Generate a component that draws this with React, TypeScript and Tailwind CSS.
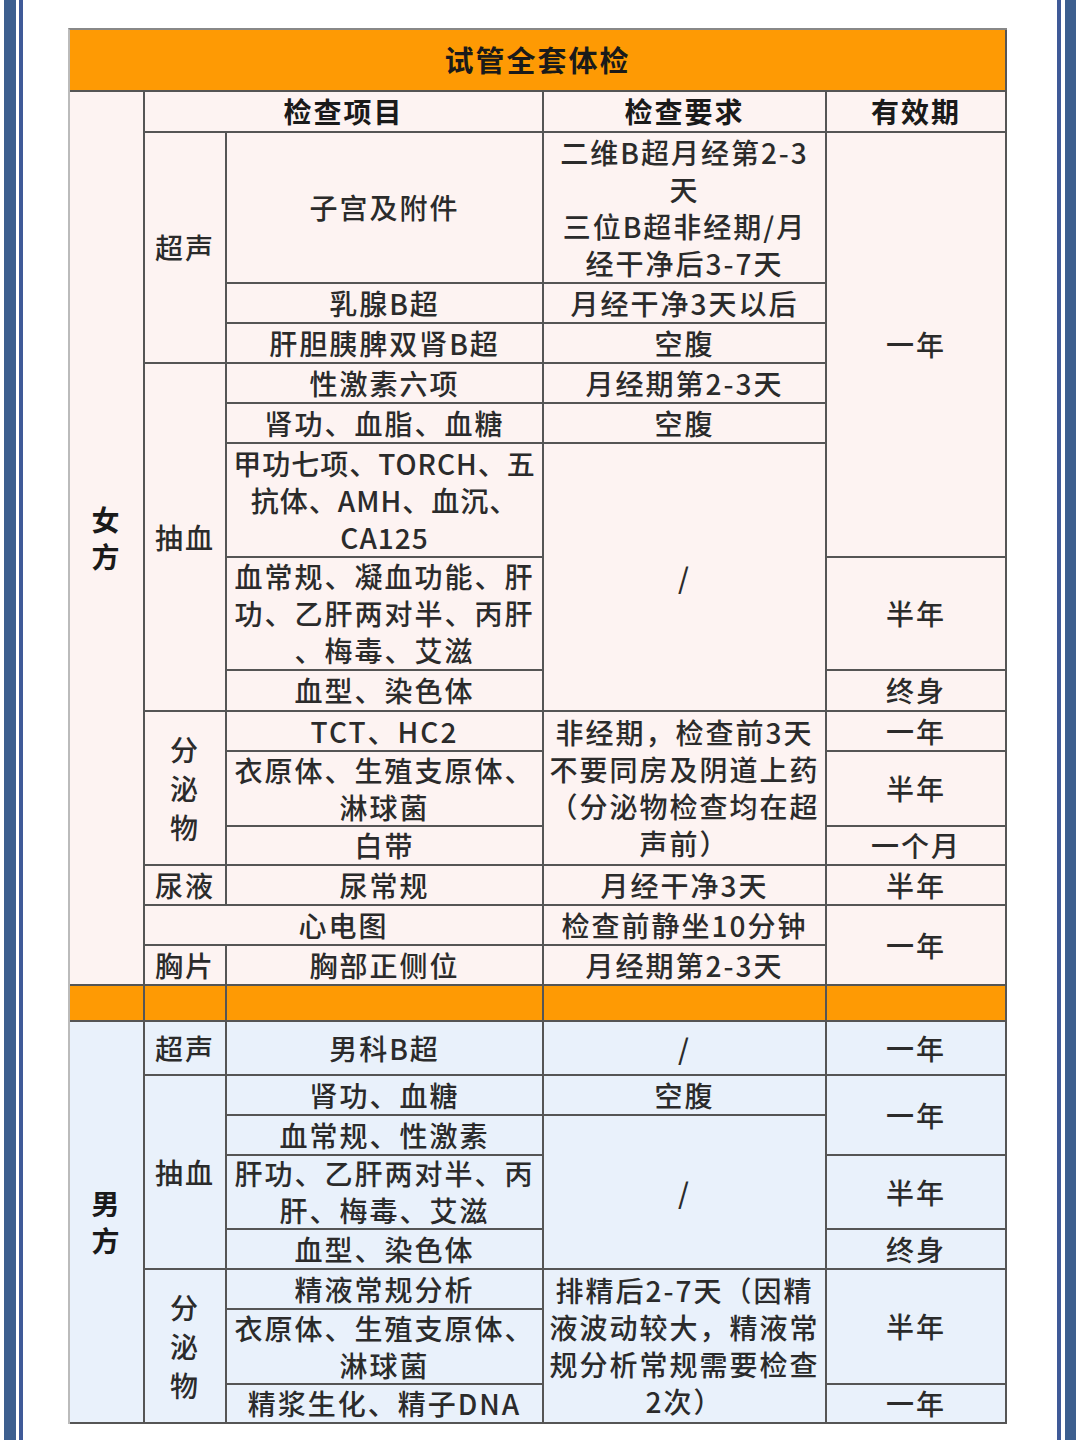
import React from 'react';

type Tone = 'f' | 'm' | 'o';

interface CellProps {
  pos: string;
  tone: Tone;
  bold?: boolean;
  children?: React.ReactNode;
}

const toneBg: Record<Tone, string> = {
  f: 'bg-[#fdf3f2]',
  m: 'bg-[#e9f1fb]',
  o: 'bg-[#fe9a04]',
};

const Cell: React.FC<CellProps> = ({ pos, tone, bold, children }) => (
  <div
    className={`${pos} ${toneBg[tone]} flex items-center justify-center text-center border-r-2 border-b-2 border-[#555] leading-[37px] whitespace-nowrap ${
      bold ? 'font-bold text-[#1a1a1a]' : 'font-medium text-[#2b2b2b]'
    }`}
  >
    <div>{children}</div>
  </div>
);

const Lines: React.FC<{ lines: string[] }> = ({ lines }) => (
  <>
    {lines.map((l, i) => (
      <div key={i}>{l}</div>
    ))}
  </>
);

const App: React.FC = () => {
  return (
    <div className="w-[1080px] h-[1440px] bg-white flex overflow-hidden">
      {/* left frame */}
      <div className="w-[4px] shrink-0" />
      <div className="w-[12px] shrink-0 bg-[#3d5f8f]" />
      <div className="w-[3px] shrink-0" />
      <div className="w-[4px] shrink-0 bg-[#3f5a98]" />

      <div className="flex-1 pt-[28px] pl-[45px]">
        <div
          className="grid w-fit grid-cols-[75px_82px_317px_283px_180px] grid-rows-[62px_41px_151px_40px_40px_40px_40px_114px_113px_41px_40px_75px_39px_40px_40px_40px_36px_54px_40px_40px_74px_40px_40px_75px_39px] border-t-2 border-l-2 border-t-[#888] border-l-[#bbb] text-[28px] tracking-[2px]"
          style={{ fontFamily: '"Noto Sans CJK SC", "Noto Sans", sans-serif' }}
        >
          {/* title */}
          <Cell pos="col-start-1 col-span-5 row-start-1" tone="o" bold>
            <span className="text-[29px]">试管全套体检</span>
          </Cell>

          {/* header */}
          <Cell pos="col-start-1 row-start-2 row-span-15" tone="f" bold>
            <div className="leading-[37px]">女<br />方</div>
          </Cell>
          <Cell pos="col-start-2 col-span-2 row-start-2" tone="f" bold>检查项目</Cell>
          <Cell pos="col-start-4 row-start-2" tone="f" bold>检查要求</Cell>
          <Cell pos="col-start-5 row-start-2" tone="f" bold>有效期</Cell>

          {/* 女方 超声 */}
          <Cell pos="col-start-2 row-start-3 row-span-3" tone="f">超声</Cell>
          <Cell pos="col-start-3 row-start-3" tone="f">子宫及附件</Cell>
          <Cell pos="col-start-4 row-start-3" tone="f">
            <Lines lines={['二维B超月经第2-3', '天', '三位B超非经期/月', '经干净后3-7天']} />
          </Cell>
          <Cell pos="col-start-5 row-start-3 row-span-6" tone="f">一年</Cell>
          <Cell pos="col-start-3 row-start-4" tone="f">乳腺B超</Cell>
          <Cell pos="col-start-4 row-start-4" tone="f">月经干净3天以后</Cell>
          <Cell pos="col-start-3 row-start-5" tone="f">肝胆胰脾双肾B超</Cell>
          <Cell pos="col-start-4 row-start-5" tone="f">空腹</Cell>

          {/* 女方 抽血 */}
          <Cell pos="col-start-2 row-start-6 row-span-5" tone="f">抽血</Cell>
          <Cell pos="col-start-3 row-start-6" tone="f">性激素六项</Cell>
          <Cell pos="col-start-4 row-start-6" tone="f">月经期第2-3天</Cell>
          <Cell pos="col-start-3 row-start-7" tone="f">肾功、血脂、血糖</Cell>
          <Cell pos="col-start-4 row-start-7" tone="f">空腹</Cell>
          <Cell pos="col-start-3 row-start-8" tone="f">
            <div className="tracking-[1px]">
              <Lines lines={['甲功七项、TORCH、五', '抗体、AMH、血沉、', 'CA125']} />
            </div>
          </Cell>
          <Cell pos="col-start-4 row-start-8 row-span-3" tone="f">/</Cell>
          <Cell pos="col-start-3 row-start-9" tone="f">
            <Lines lines={['血常规、凝血功能、肝', '功、乙肝两对半、丙肝', '、梅毒、艾滋']} />
          </Cell>
          <Cell pos="col-start-5 row-start-9" tone="f">半年</Cell>
          <Cell pos="col-start-3 row-start-10" tone="f">血型、染色体</Cell>
          <Cell pos="col-start-5 row-start-10" tone="f">终身</Cell>

          {/* 女方 分泌物 */}
          <Cell pos="col-start-2 row-start-11 row-span-3" tone="f">
            <div className="leading-[39px]">分<br />泌<br />物</div>
          </Cell>
          <Cell pos="col-start-3 row-start-11" tone="f">TCT、HC2</Cell>
          <Cell pos="col-start-4 row-start-11 row-span-3" tone="f">
            <Lines lines={['非经期，检查前3天', '不要同房及阴道上药', '（分泌物检查均在超', '声前）']} />
          </Cell>
          <Cell pos="col-start-5 row-start-11" tone="f">一年</Cell>
          <Cell pos="col-start-3 row-start-12" tone="f">
            <Lines lines={['衣原体、生殖支原体、', '淋球菌']} />
          </Cell>
          <Cell pos="col-start-5 row-start-12" tone="f">半年</Cell>
          <Cell pos="col-start-3 row-start-13" tone="f">白带</Cell>
          <Cell pos="col-start-5 row-start-13" tone="f">一个月</Cell>

          {/* 女方 尿液 / 心电图 / 胸片 */}
          <Cell pos="col-start-2 row-start-14" tone="f">尿液</Cell>
          <Cell pos="col-start-3 row-start-14" tone="f">尿常规</Cell>
          <Cell pos="col-start-4 row-start-14" tone="f">月经干净3天</Cell>
          <Cell pos="col-start-5 row-start-14" tone="f">半年</Cell>
          <Cell pos="col-start-2 col-span-2 row-start-15" tone="f">心电图</Cell>
          <Cell pos="col-start-4 row-start-15" tone="f">检查前静坐10分钟</Cell>
          <Cell pos="col-start-5 row-start-15 row-span-2" tone="f">一年</Cell>
          <Cell pos="col-start-2 row-start-16" tone="f">胸片</Cell>
          <Cell pos="col-start-3 row-start-16" tone="f">胸部正侧位</Cell>
          <Cell pos="col-start-4 row-start-16" tone="f">月经期第2-3天</Cell>

          {/* separator */}
          <Cell pos="col-start-1 row-start-17" tone="o" />
          <Cell pos="col-start-2 row-start-17" tone="o" />
          <Cell pos="col-start-3 row-start-17" tone="o" />
          <Cell pos="col-start-4 row-start-17" tone="o" />
          <Cell pos="col-start-5 row-start-17" tone="o" />

          {/* 男方 */}
          <Cell pos="col-start-1 row-start-18 row-span-8" tone="m" bold>
            <div className="leading-[37px]">男<br />方</div>
          </Cell>
          <Cell pos="col-start-2 row-start-18" tone="m">超声</Cell>
          <Cell pos="col-start-3 row-start-18" tone="m">男科B超</Cell>
          <Cell pos="col-start-4 row-start-18" tone="m">/</Cell>
          <Cell pos="col-start-5 row-start-18" tone="m">一年</Cell>

          <Cell pos="col-start-2 row-start-19 row-span-4" tone="m">抽血</Cell>
          <Cell pos="col-start-3 row-start-19" tone="m">肾功、血糖</Cell>
          <Cell pos="col-start-4 row-start-19" tone="m">空腹</Cell>
          <Cell pos="col-start-5 row-start-19 row-span-2" tone="m">一年</Cell>
          <Cell pos="col-start-3 row-start-20" tone="m">血常规、性激素</Cell>
          <Cell pos="col-start-4 row-start-20 row-span-3" tone="m">/</Cell>
          <Cell pos="col-start-3 row-start-21" tone="m">
            <Lines lines={['肝功、乙肝两对半、丙', '肝、梅毒、艾滋']} />
          </Cell>
          <Cell pos="col-start-5 row-start-21" tone="m">半年</Cell>
          <Cell pos="col-start-3 row-start-22" tone="m">血型、染色体</Cell>
          <Cell pos="col-start-5 row-start-22" tone="m">终身</Cell>

          <Cell pos="col-start-2 row-start-23 row-span-3" tone="m">
            <div className="leading-[39px]">分<br />泌<br />物</div>
          </Cell>
          <Cell pos="col-start-3 row-start-23" tone="m">精液常规分析</Cell>
          <Cell pos="col-start-4 row-start-23 row-span-3" tone="m">
            <Lines lines={['排精后2-7天（因精', '液波动较大，精液常', '规分析常规需要检查', '2次）']} />
          </Cell>
          <Cell pos="col-start-5 row-start-23 row-span-2" tone="m">半年</Cell>
          <Cell pos="col-start-3 row-start-24" tone="m">
            <Lines lines={['衣原体、生殖支原体、', '淋球菌']} />
          </Cell>
          <Cell pos="col-start-3 row-start-25" tone="m">精浆生化、精子DNA</Cell>
          <Cell pos="col-start-5 row-start-25" tone="m">一年</Cell>
        </div>
      </div>

      {/* right frame */}
      <div className="w-[4px] shrink-0 bg-[#3f5a98]" />
      <div className="w-[4px] shrink-0" />
      <div className="w-[11px] shrink-0 bg-[#3d5f8f]" />
      <div className="w-[4px] shrink-0" />
    </div>
  );
};

export default App;
